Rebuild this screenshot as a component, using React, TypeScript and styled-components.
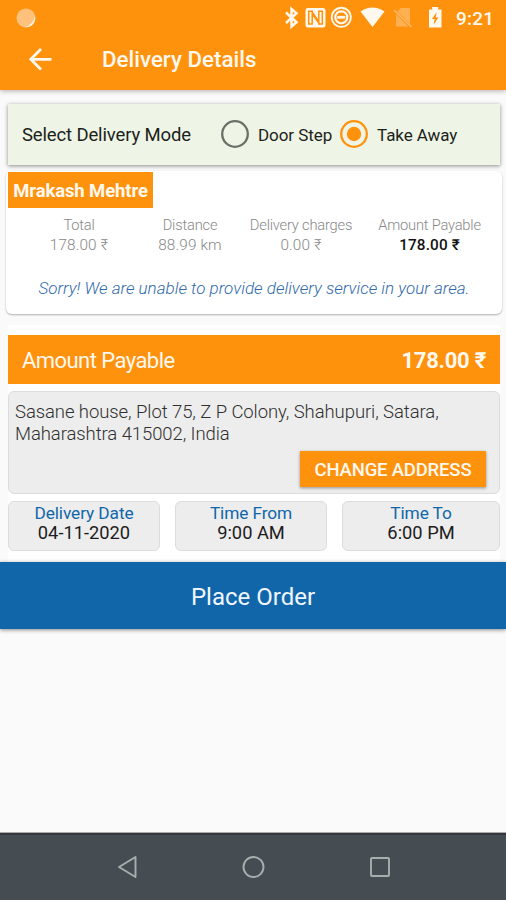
import React from "react";
import styled, { createGlobalStyle } from "styled-components";

const orange = "#ff920d";
const blue = "#1166aa";
const cream = "#fff8ee";

const GlobalStyle = createGlobalStyle`
  * { box-sizing: border-box; }
  body { margin: 0; background: #fafafa; font-family: Roboto, "Noto Sans", sans-serif; }
  button { font-family: inherit; border: 0; padding: 0; }
`;

const Screen = styled.div`
  width: 506px;
  height: 900px;
  display: flex;
  flex-direction: column;
  background: #fafafa;
  overflow: hidden;
`;

const Header = styled.header`
  height: 90px;
  flex: none;
  background: ${orange};
  color: ${cream};
  box-shadow: 0 1px 5px rgba(0, 0, 0, 0.3);
`;

const StatusBar = styled.div`
  height: 35px;
  display: flex;
  align-items: center;
  justify-content: space-between;
  padding: 0 9px 0 16px;
`;

const Notification = styled.svg`
  width: 20px;
  height: 20px;
  display: block;
`;

const StatusIcons = styled.svg`
  width: 166px;
  height: 35px;
  display: block;
`;

const StatusRight = styled.div`
  display: flex;
  align-items: center;
`;

const Clock = styled.span`
  width: 50px;
  padding-left: 9px;
  padding-top: 1px;
  font-size: 19px;
  font-weight: 500;
  letter-spacing: 0.2px;
`;

const TitleBar = styled.div`
  height: 50px;
  display: flex;
  align-items: center;
  padding-left: 28px;
`;

const BackIcon = styled.svg`
  width: 24px;
  height: 24px;
  display: block;
`;

const Title = styled.h1`
  margin: 0 0 2px 50px;
  font-size: 22.3px;
  line-height: 26px;
  font-weight: 500;
  letter-spacing: 0.02px;
`;

const ModeCard = styled.section`
  height: 61px;
  flex: none;
  margin: 14px 6px 0 8px;
  display: flex;
  align-items: center;
  padding: 0 0 1px 14px;
  background: #eef4e6;
  box-shadow: 0 1px 4px rgba(0, 0, 0, 0.45);
  color: #1c1f1a;
`;

const ModeLabel = styled.span`
  width: 198px;
  padding-top: 2px;
  font-size: 18.5px;
  letter-spacing: -0.14px;
`;

const Option = styled.label<{ $width: number }>`
  width: ${(p) => p.$width}px;
  display: flex;
  align-items: center;
  gap: 8px;
  font-size: 17px;
  letter-spacing: -0.07px;
  white-space: nowrap;
`;

const OptionText = styled.span`
  padding-top: 2px;
`;

const RadioIcon = styled.svg`
  width: 30px;
  height: 30px;
  flex: none;
`;

const SummaryCard = styled.section`
  height: 143px;
  flex: none;
  margin: 6px 4px 0 6px;
  padding: 1px 2px;
  border-radius: 6px;
  background: #fff;
  box-shadow: 0 1px 2px rgba(0, 0, 0, 0.3);
`;

const CustomerTag = styled.div`
  width: 145px;
  height: 36px;
  display: flex;
  align-items: center;
  justify-content: center;
  padding-top: 2px;
  background: ${orange};
  color: ${cream};
  font-size: 18.5px;
  font-weight: 700;
  letter-spacing: -0.12px;
`;

const Figures = styled.div`
  display: grid;
  grid-template-columns: 142px 80px 142px 115px;
  margin-top: 7px;
  text-align: center;
  color: #888;
  font-size: 14.7px;
  line-height: 20px;
  white-space: nowrap;
`;

const FigureName = styled.div`
  font-weight: 300;
  letter-spacing: -0.2px;
`;

const FigureValue = styled.div<{ $strong?: boolean }>`
  font-size: 15.3px;
  letter-spacing: 0.15px;
  font-weight: ${(p) => (p.$strong ? 500 : 300)};
  color: ${(p) => (p.$strong ? "#111" : "inherit")};
`;

const Notice = styled.p`
  margin: 22px 0 0;
  text-align: center;
  color: #3069aa;
  font-size: 17px;
  line-height: 22px;
  font-style: italic;
  font-weight: 300;
  letter-spacing: 0.01px;
`;

const OrderPanel = styled.section`
  flex: none;
  height: 237px;
  margin: 11px 6px 0 8px;
  padding-top: 10px;
  background: #fff;
`;

const Payable = styled.div`
  height: 49px;
  display: flex;
  align-items: center;
  justify-content: space-between;
  padding: 2px 14px 0 14px;
  background: ${orange};
  color: ${cream};
  font-size: 22px;
  letter-spacing: -0.55px;
`;

const Total = styled.strong`
  font-weight: 700;
  letter-spacing: -0.25px;
`;

const AddressBox = styled.div`
  height: 103px;
  margin-top: 7px;
  display: flex;
  flex-direction: column;
  justify-content: space-between;
  align-items: flex-end;
  padding: 9px 13px 6px 6px;
  border: 1px solid #dcdcdc;
  border-radius: 6px;
  background: #ededed;
`;

const Address = styled.p`
  align-self: stretch;
  margin: 0;
  font-size: 18.5px;
  line-height: 22px;
  font-weight: 300;
  letter-spacing: -0.08px;
  color: #303030;
`;

const ChangeButton = styled.button`
  width: 186px;
  height: 36px;
  padding-top: 2px;
  background: ${orange};
  color: ${cream};
  font-size: 18.5px;
  font-weight: 500;
  letter-spacing: -0.18px;
  box-shadow: 0 1px 3px rgba(0, 0, 0, 0.4);
`;

const Slots = styled.div`
  margin-top: 7px;
  display: grid;
  grid-template-columns: 152px 152px 158px;
  gap: 15px;
`;

const Slot = styled.div`
  height: 50px;
  padding-top: 2px;
  border: 1px solid #dcdcdc;
  border-radius: 6px;
  background: #ededed;
  text-align: center;
  font-size: 18.3px;
  line-height: 19px;
  color: #1c1c1c;
`;

const SlotName = styled.div`
  color: ${blue};
  font-size: 17.3px;
  letter-spacing: -0.1px;
`;

const PlaceOrder = styled.button`
  height: 67px;
  flex: none;
  padding-top: 2px;
  background: ${blue};
  color: #f0f6ff;
  font-size: 24px;
  box-shadow: 0 1px 4px rgba(0, 0, 0, 0.45);
`;

const NavBar = styled.nav`
  height: 67px;
  flex: none;
  margin-top: auto;
  border-top: 2px solid #34373d;
  box-shadow: 0 -1px 0 #aaa;
  background: #464d52;
`;

const NavIcons = styled.svg`
  width: 506px;
  height: 65px;
  display: block;
`;

const Radio = ({ checked }: { checked?: boolean }) => (
  <RadioIcon viewBox="0 0 30 30">
    <circle cx="15" cy="15" r="12.8" fill="none" stroke={checked ? orange : "#6b7067"} strokeWidth="2.3" />
    {checked && <circle cx="15" cy="15" r="7.2" fill={orange} />}
  </RadioIcon>
);

const figures = [
  { name: "Total", value: "178.00 ₹" },
  { name: "Distance", value: "88.99 km" },
  { name: "Delivery charges", value: "0.00 ₹" },
  { name: "Amount Payable", value: "178.00 ₹", strong: true },
];

const slots = [
  ["Delivery Date", "04-11-2020"],
  ["Time From", "9:00 AM"],
  ["Time To", "6:00 PM"],
];

export default function App() {
  return (
    <>
      <GlobalStyle />
      <Screen>
        <Header>
          <StatusBar>
            <Notification viewBox="0 0 20 20">
              <circle cx="10" cy="10" r="9.5" fill="#ffc17c" />
              <path d="M19 8A9 9 0 0 1 9 19Q17 17 19 8Z" fill="#fff0db" />
            </Notification>
            <StatusRight>
              <StatusIcons viewBox="281 0 166 35" fill="none">
                <path d="M286 12.5 296.5 22.3 291.5 26.5V9l5 4.2L286 23" stroke={cream} strokeWidth="2.5" />
                <rect x="305.5" y="8" width="20" height="19.5" rx="2.5" fill={cream} />
                <path d="M313 11.3h-4.3V24h3.5V13.8L319.5 24M318 24h4.3V11.3h-3.5v10.2L311.5 11.3" stroke={orange} strokeWidth="1.5" />
                <circle cx="341.3" cy="17.3" r="9.6" stroke={cream} strokeWidth="1.9" />
                <circle cx="341.3" cy="17.3" r="6" stroke={cream} strokeWidth="2.2" />
                <path d="M337.3 17.3h8" stroke={cream} strokeWidth="2.8" />
                <path d="M360.5 11.5Q372.5 3.5 384.5 11.5L372.5 27Z" fill={cream} />
                <path d="M396 13l5-5h9v18.5h-14Z" fill="#ffb052" />
                <path d="M393.5 9.5 411 27" stroke={orange} strokeWidth="3" />
                <path d="M394 10 411.5 27" stroke="#ffb96a" strokeWidth="1.7" />
                <path d="M429 9.5h3.2V7h6v2.5h3.3V27.5H429Z" fill={cream} />
                <path d="M436.6 12.3 432 19h2.6l-1 5.8 4.8-7.2h-2.6Z" fill={orange} />
              </StatusIcons>
              <Clock>9:21</Clock>
            </StatusRight>
          </StatusBar>
          <TitleBar>
            <BackIcon viewBox="0 0.7 24 24" fill="none" stroke={cream} strokeWidth="2.8">
              <path d="M23.5 12H3M13 1.8 2.8 12 13 22.2" />
            </BackIcon>
            <Title>Delivery Details</Title>
          </TitleBar>
        </Header>

        <ModeCard>
          <ModeLabel>Select Delivery Mode</ModeLabel>
          <Option $width={119}>
            <Radio />
            <OptionText>Door Step</OptionText>
          </Option>
          <Option $width={130}>
            <Radio checked />
            <OptionText>Take Away</OptionText>
          </Option>
        </ModeCard>

        <SummaryCard>
          <CustomerTag>Mrakash Mehtre</CustomerTag>
          <Figures>
            {figures.map((f) => (
              <div key={f.name}>
                <FigureName>{f.name}</FigureName>
                <FigureValue $strong={f.strong}>{f.value}</FigureValue>
              </div>
            ))}
          </Figures>
          <Notice>Sorry! We are unable to provide delivery service in your area.</Notice>
        </SummaryCard>

        <OrderPanel>
          <Payable>
            <span>Amount Payable</span>
            <Total>178.00 ₹</Total>
          </Payable>
          <AddressBox>
            <Address>
              Sasane house, Plot 75, Z P Colony, Shahupuri, Satara,
              <br />
              Maharashtra 415002, India
            </Address>
            <ChangeButton>CHANGE ADDRESS</ChangeButton>
          </AddressBox>
          <Slots>
            {slots.map(([name, value]) => (
              <Slot key={name}>
                <SlotName>{name}</SlotName>
                {value}
              </Slot>
            ))}
          </Slots>
        </OrderPanel>

        <PlaceOrder>Place Order</PlaceOrder>

        <NavBar>
          <NavIcons viewBox="0 835 506 65" fill="none" stroke="#a8aeae" strokeWidth="1.9" strokeLinejoin="round">
            <path d="M135.5 857v20L119 867Z" />
            <circle cx="253.5" cy="867" r="10" />
            <rect x="371" y="858" width="18" height="18" rx="1" />
          </NavIcons>
        </NavBar>
      </Screen>
    </>
  );
}
